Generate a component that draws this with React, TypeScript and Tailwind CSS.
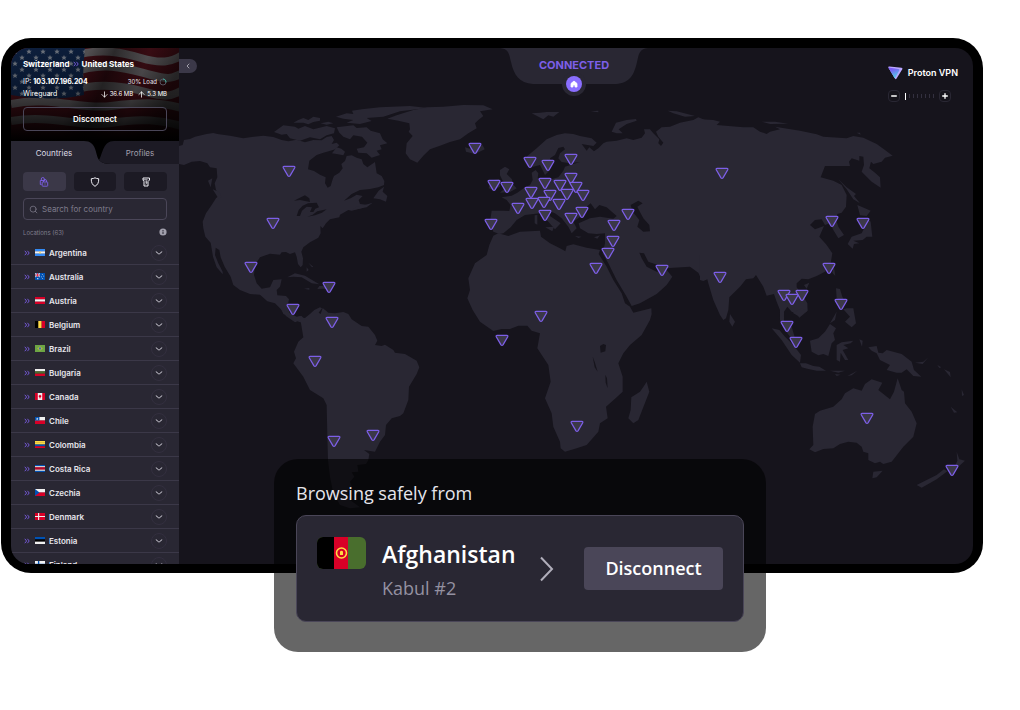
import type { ReactNode } from "react";
import {
  ArrowDown,
  ArrowUp,
  ChevronDown,
  ChevronLeft,
  Minus,
  Plus,
  Search,
} from "lucide-react";

interface Country {
  name: string;
  flag: ReactNode;
}

const hStripes = (...colors: string[]) =>
  colors.map((color, i) => (
    <rect key={i} y={(i * 12) / colors.length} width="18" height={12 / colors.length + 0.1} fill={color} />
  ));

const countries: Country[] = [
  {
    name: "Argentina",
    flag: (
      <>
        {hStripes("#338af3", "#f0f0f0", "#338af3")}
        <circle cx="9" cy="6" r="1.5" fill="#ffda44" />
      </>
    ),
  },
  {
    name: "Australia",
    flag: (
      <>
        <rect width="18" height="12" fill="#0052b4" />
        <path d="M0 0l9 7M9 0L0 7" stroke="#f0f0f0" strokeWidth="1.4" />
        <path d="M4.5 0v7M0 3.5h9" stroke="#f0f0f0" strokeWidth="2.4" />
        <path d="M4.5 0v7M0 3.5h9" stroke="#d80027" strokeWidth="1.3" />
        <path d="M4 8.5h2v2H4zM12.5 2h1.3v1.3h-1.3zM15 4.5h1.3v1.3H15zM11 6h1.3v1.3H11zM13 9h1.3v1.3H13z" fill="#f0f0f0" />
      </>
    ),
  },
  { name: "Austria", flag: hStripes("#d80027", "#f0f0f0", "#d80027") },
  {
    name: "Belgium",
    flag: (
      <>
        <rect width="6" height="12" fill="#000" />
        <rect x="6" width="6" height="12" fill="#ffda44" />
        <rect x="12" width="6" height="12" fill="#d80027" />
      </>
    ),
  },
  {
    name: "Brazil",
    flag: (
      <>
        <rect width="18" height="12" fill="#6da544" />
        <path d="M9 2L14 6 9 10 4 6z" fill="#b8b84a" />
        <circle cx="9" cy="6" r="2" fill="#3a6fb5" />
      </>
    ),
  },
  { name: "Bulgaria", flag: hStripes("#f0f0f0", "#496e2d", "#d80027") },
  {
    name: "Canada",
    flag: (
      <>
        <rect width="18" height="12" fill="#f0f0f0" />
        <path d="M0 0h5v12H0zM13 0h5v12h-5z" fill="#d80027" />
        <path d="M9 2.5l1 1.5 1.5.5-.5 2.500-1.500 1V10h-1V8L7 7l-.5-2.500L8 4z" fill="#d80027" />
      </>
    ),
  },
  {
    name: "Chile",
    flag: (
      <>
        {hStripes("#f0f0f0", "#d80027")}
        <rect width="8" height="6" fill="#0052b4" />
        <path d="M4 1l.7 1.5h1.5L5 3.5 5.5 5 4 4.2 2.5 5 3 3.5 1.8 2.5h1.5z" fill="#f0f0f0" />
      </>
    ),
  },
  { name: "Colombia", flag: hStripes("#ffda44", "#ffda44", "#0052b4", "#d80027") },
  { name: "Costa Rica", flag: hStripes("#0052b4", "#f0f0f0", "#d80027", "#d80027", "#f0f0f0", "#0052b4") },
  {
    name: "Czechia",
    flag: (
      <>
        {hStripes("#f0f0f0", "#d80027")}
        <path d="M0 0l8 6-8 6z" fill="#0052b4" />
      </>
    ),
  },
  {
    name: "Denmark",
    flag: (
      <>
        <rect width="18" height="12" fill="#d80027" />
        <path d="M6.5 0v12M0 6h18" stroke="#f0f0f0" strokeWidth="2" />
      </>
    ),
  },
  { name: "Estonia", flag: hStripes("#0052b4", "#000", "#f0f0f0") },
  {
    name: "Finland",
    flag: (
      <>
        <rect width="18" height="12" fill="#f0f0f0" />
        <path d="M6.5 0v12M0 6h18" stroke="#0052b4" strokeWidth="2.5" />
      </>
    ),
  },
];

const servers: [number, number][] = [
  [289, 171], [273, 223], [251, 267], [329, 287], [293, 309], [332, 322], [315, 361], [334, 441],
  [373, 435], [475, 148], [494, 185], [507, 187], [491, 224], [530, 162], [548, 165], [571, 159],
  [545, 183], [571, 178], [560, 185], [531, 192], [550, 195], [567, 194], [576, 187], [583, 195],
  [518, 208], [532, 203], [544, 202], [559, 204], [545, 215], [571, 218], [582, 212], [628, 214],
  [614, 225], [613, 241], [608, 253], [596, 268], [662, 270], [541, 316], [502, 340], [577, 426],
  [722, 173], [720, 277], [832, 221], [863, 223], [829, 268], [784, 295], [802, 295], [792, 299],
  [841, 304], [787, 326], [796, 342], [867, 418], [952, 470],
];

function WorldMap() {
  return (
    <svg
      className="absolute inset-0 h-full w-full"
      viewBox="179 48 794 516"
      preserveAspectRatio="xMidYMin slice"
      aria-hidden="true"
    >
      <g transform="scale(.33333)" fill="#292733">
        {/* North America and Greenland */}
        <g transform="translate(540 270)">
          <path d="M-3 168L8 165 12 150 30 147 45 140 80 132 100 129 112 132 150 137 190 145 215 141 250 137 280 141 305 150 325 154 350 149 375 157 400 150 425 151 440 141 455 138 462 150 455 162 470 158 478 166 466 178 446 184 430 188 410 195 388 212 384 238 402 243 420 254 437 262 435 280 443 293 452 288 458 268 462 258 478 248 488 235 484 222 495 213 500 198 515 196 530 203 545 208 550 222 562 232 585 216 590 250 605 258 613 273 612 285 595 292 570 297 540 300 515 312 492 332 512 325 530 314 548 318 536 330 540 342 565 345 545 355 515 362 505 360 480 374 478 382 450 388 438 400 428 415 421 408 422 430 415 443 390 457 370 472 364 485 369 505 368 525 362 532 354 522 350 500 345 487 330 492 318 486 305 487 300 494 270 491 240 502 225 525 222 555 230 580 245 596 270 592 280 570 305 568 300 590 290 600 292 616 318 618 327 628 322 650 330 672 345 683 360 678 372 688 380 700 370 712 366 698 352 694 345 697 318 678 300 655 285 640 262 634 240 614 210 612 180 600 160 585 152 560 134 530 122 502 118 480 107 473 105 495 115 520 128 545 128 553 110 532 99 500 92 458 76 440 70 415 68 395 78 370 95 345 108 325 118 316 108 300 104 280 112 262 110 235 90 232 82 220 60 213 35 215 12 225-3 222Z" />
          <path d="M622 86L650 76 700 60 740 52 790 50 850 45 910 46 938 58 900 64 910 78 895 90 885 100 890 115 865 130 840 148 810 156 780 167 750 178 730 197 712 218 690 208 677 190 680 160 698 138 686 125 690 118 688 100 655 92Z" />
          <path d="M282 126L310 106 345 110 355 116 375 108 400 118 425 112 440 108 465 115 462 130 440 136 420 148 390 142 360 152 330 145 320 132 305 134ZM340 98L355 90 370 84 385 90 400 80 420 84 420 92 400 96 385 103 370 98ZM468 80L500 70 520 72 516 62 545 58 600 52 690 48 742 54 660 64 610 80 560 84 575 93 540 102 500 98 520 90 490 86ZM422 100L445 95 460 100 440 104ZM470 112L520 106 530 114 560 112 572 122 600 130 608 148 622 160 600 166 605 178 590 182 600 195 575 203 560 190 535 188 530 176 552 172 562 158 546 140 520 136 510 148 490 140 478 128ZM456 190L470 172 484 176 495 185 490 196 470 192ZM580 325L596 302 612 290 608 305 622 318 618 335 600 328ZM516 360L530 350 552 346 578 338 560 352ZM98 298L118 306 125 322 116 326ZM84 272L97 265 92 292ZM322 562L345 550 375 557 400 572 418 583 395 580 365 562 340 560ZM412 597L418 588 432 588 446 598 428 596ZM372 596L388 594 388 599ZM380 532L386 540 380 545ZM385 518L400 530 396 532Z" />
          <path
            fill="#16141c"
            d="M342 332L358 324 375 316 388 325 390 336 375 333 360 330ZM350 378L356 360 368 347 384 340 410 338 417 352 406 356 400 366 390 366 396 352 380 350 366 362 360 378ZM382 380L398 374 412 364 440 358 426 368 405 376Z"
          />
        </g>
        {/* South America */}
        <g transform="translate(780 930)">
          <path d="M120 22L135 24 150 12 163 0 180 -8 186 -5 176 8 182 12 188-6 205 8 225 10 250 6 265 12 275 28 305 48 325 50 345 75 352 92 345 105 365 108 375 104 400 120 405 128 435 132 470 152 478 172 470 192 447 230 445 270 430 310 420 318 395 325 378 345 375 375 360 395 345 425 312 420 328 432 325 450 318 462 292 465 295 485 275 487 283 500 270 515 276 530 262 545 270 570 300 592 270 595 240 585 220 550 210 500 204 450 202 375 200 285 190 265 150 240 130 200 100 160 108 145 102 125 115 95 130 82Z" />
          <path d="M65 0L80 5 110 20 125 18 135 30 120 30 105 33 90 20 70 12Z" />
        </g>
        {/* Europe, Middle East and Africa */}
        <g transform="translate(1320 270)">
          <path d="M155 362L190 362 208 363 212 345 200 330 185 322 215 317 232 308 255 292 270 285 278 270 275 248 287 240 295 250 293 265 305 272 335 268 355 262 370 242 375 230 400 222 420 216 390 220 365 216 355 205 360 190 375 178 370 170 355 174 345 195 330 205 335 225 325 245 315 255 305 235 300 225 280 230 262 228 252 212 262 198 290 175 320 148 350 135 375 130 400 132 420 138 455 145 470 158 460 168 425 162 440 182 448 172 462 184 475 175 490 160 500 155 530 152 560 145 580 150 605 143 615 130 612 118 630 118 640 130 658 148 655 160 663 168 670 158 655 140 648 125 665 112 690 110 720 98 760 90 775 82 800 92 800 560 785 570 775 548 750 530 700 533 680 535 645 522 625 515 612 490 598 488 605 505 620 530 650 545 680 540 697 560 680 585 650 612 600 640 575 648 560 620 530 570 505 520 488 490 495 460 495 430 470 432 445 430 420 415 416 400 450 385 480 380 520 386 530 378 500 352 478 345 465 358 452 340 440 350 428 375 400 395 410 415 395 430 385 410 365 385 345 370 325 362 330 378 362 400 345 418 325 395 300 370 280 372 255 375 230 390 212 412 190 430 178 432 160 425 150 395Z" />
          <path d="M160 437L175 430 205 438 240 425 300 422 303 440 330 460 360 475 376 484 380 468 400 463 440 473 480 480 476 492 500 530 520 570 545 610 555 640 570 650 580 668 634 655 635 672 630 690 605 735 570 765 550 790 535 820 548 860 548 905 530 922 498 950 503 985 480 1000 475 1025 440 1065 410 1075 375 1085 362 1075 360 1055 340 1010 335 970 315 925 332 875 325 825 292 775 300 730 275 722 262 707 235 707 210 717 185 717 160 723 120 695 98 660 82 625 90 600 85 565 105 520 140 495 148 465Z" />
          <path d="M180 240L195 230 208 238 200 252 216 268 218 282 230 295 210 306 180 308 195 295 198 282 188 272 180 256ZM150 280L160 270 178 268 180 290 160 300 146 295ZM75 172L90 176 100 168 128 166 134 178 105 192 78 185ZM515 125L528 98 560 90 588 87 590 92 560 102 536 118 548 130 530 130ZM275 70L300 68 320 66 358 66 340 80 325 76 310 88ZM683 62L710 64 765 78 735 80 700 70ZM452 64L475 62 475 67ZM284 376L292 375 292 404 284 400ZM316 412L342 410 337 424ZM405 438L425 440 415 444ZM462 442L480 436 472 446ZM620 875L628 905 595 990 580 1000 565 985 572 960 574 922 600 905 612 888Z" />
          <path
            fill="#16141c"
            d="M572 345L595 332 608 340 592 350 598 362 610 385 628 405 630 424 610 425 592 410 598 390 578 365ZM480 768L490 762 498 765 496 784 482 788ZM458 800L464 815 473 845 464 832ZM496 854L501 865 503 895 497 878Z"
          />
        </g>
        {/* Asia */}
        <g transform="translate(2100 270)">
          <path d="M0 88L40 90 60 95 50 105 130 112 160 112 180 125 200 132 210 125 240 118 225 110 300 122 350 133 370 140 440 145 460 138 490 143 530 162 555 180 578 197 555 203 545 215 520 222 513 215 508 235 525 248 540 262 542 293 515 275 485 245 492 225 490 200 478 198 478 212 455 205 447 215 450 228 375 228 362 262 400 272 425 285 440 315 438 350 425 368 412 372 408 388 415 410 432 435 415 445 400 420 390 400 375 405 365 388 345 390 330 405 345 418 372 408 358 440 380 465 397 490 392 520 375 545 350 558 325 568 305 566 290 580 290 592 310 620 322 640 323 662 298 683 290 670 275 665 262 650 252 665 252 690 262 720 250 715 240 690 240 660 230 635 222 612 200 617 190 590 168 555 160 565 138 568 120 590 88 622 85 660 78 685 70 690 60 675 40 630 25 580 22 568 10 573 0 570Z" />
          <path d="M185 95L225 95 265 101 210 102ZM470 128L480 128 482 134ZM415 268L440 292 468 312 462 318 480 340 460 328 440 298ZM472 345L495 355 512 362 500 378 480 376ZM500 385L512 395 517 440 500 440 488 450 460 452 478 460 462 462 458 476 443 462 455 440 485 430 495 410ZM90 672L105 695 97 710 88 695ZM312 585L328 578 320 596ZM402 530L406 558 397 548ZM408 595L420 597 427 620 440 645 420 630 410 625ZM390 700L410 665 405 690ZM430 658L440 655 460 655 468 700 455 712 435 695 450 680Z" />
        </g>
        {/* Indonesia and Oceania */}
        <g transform="translate(2160 930)">
          <path d="M155 55L178 60 195 80 220 105 243 135 240 158 215 135 185 90ZM190 30L215 50 225 85 210 80 195 60ZM240 160L258 160 280 168 298 170 318 182 290 182 262 176 245 172ZM270 92L295 85 315 65 330 42 348 55 340 70 345 90 335 100 325 138 310 132 295 136 275 125ZM218 8L245-5 262 2 238 20ZM350 105L365 97 400 92 392 100 370 105 385 115 368 120 385 150 375 150 362 128 360 155 350 150ZM418 88L428 92 426 110ZM445 112L470 108 475 128 488 130 500 120 545 132 575 155 582 180 604 200 580 198 560 178 545 188 530 188 500 180 510 165 480 150 470 130 455 122ZM585 158L610 155 625 142 608 162ZM330 182L375 182 355 188ZM382 198L412 182 395 196ZM345 192L362 194 350 198ZM640 150L650 160ZM652 165L664 172 658 174ZM672 178L690 186 692 202ZM725 238L732 255 726 258ZM692 290L712 307 702 308ZM268 418L280 405 278 350 285 312 300 302 340 290 365 268 375 250 400 235 425 242 435 222 455 208 487 218 475 240 510 268 522 245 533 205 545 240 552 245 555 280 575 305 590 340 580 380 550 410 515 455 490 462 480 455 465 460 445 450 445 430 430 425 425 410 410 398 385 395 360 402 340 415 310 417 285 427ZM460 485L488 482 470 502 457 505ZM710 425L718 448 735 452 715 470 700 480 712 452ZM590 525L620 510 650 495 672 478 682 484 650 508 605 533Z" />
        </g>
      </g>
      <g fill="#3b3848" stroke="#7d5fe8" strokeWidth="1.3" strokeLinejoin="round">
        {servers.map(([x, y]) => (
          <path
            key={`${x}-${y}`}
            transform={`translate(${x} ${y})`}
            d="M-4.7 -4.7H4.7Q6.4 -4.5 5.6 -3L1 4.8Q0 6 -1 4.8L-5.6 -3Q-6.4 -4.5 -4.7 -4.7Z"
          />
        ))}
      </g>
    </svg>
  );
}

// Darkened, waving stars and stripes behind the connection details
function HeaderFlag() {
  return (
    <svg
      className="absolute inset-0 h-full w-full"
      viewBox="0 0 168 93"
      preserveAspectRatio="none"
      aria-hidden="true"
    >
      <defs>
        <linearGradient id="fade" x1="0" y1="0" x2="0" y2="1">
          <stop offset="0" stopColor="#000" stopOpacity=".2" />
          <stop offset=".5" stopColor="#000" stopOpacity=".4" />
          <stop offset="1" stopColor="#000" />
        </linearGradient>
        <linearGradient id="folds" x1="0" y1="0" x2="1" y2="0.2">
          <stop offset="0" stopColor="#000" stopOpacity=".2" />
          <stop offset=".45" stopColor="#000" stopOpacity=".25" />
          <stop offset=".6" stopColor="#000" stopOpacity=".6" />
          <stop offset=".8" stopColor="#000" stopOpacity=".25" />
          <stop offset="1" stopColor="#000" stopOpacity=".6" />
        </linearGradient>
        <pattern id="stars" width="14" height="12" patternUnits="userSpaceOnUse">
          <rect width="14" height="12" fill="#14305f" />
          <path
            fill="#a9b3c4"
            d="M4 1l.8 1.7 1.9.1-1.4 1.3.5 1.9L4 5l-1.8 1 .5-1.900-1.400-1.300 1.900-.1zM11 7l.8 1.700 1.900.1-1.400 1.300.5 1.900L11 11l-1.800 1 .5-1.900-1.400-1.300 1.900-.1z"
          />
        </pattern>
      </defs>
      <rect width="168" height="93" fill="#5f1420" />
      <g fill="none" stroke="#8a8589" strokeWidth="8">
        <path d="M60 8C90 0 110 4 130 10S160 14 170 8" />
        <path d="M60 25C95 12 120 22 140 27S160 30 170 26" />
        <path d="M60 42C90 34 115 38 135 44S160 48 170 43" />
        <path d="M0 56C40 48 70 62 100 58S150 54 170 60" />
        <path d="M0 73C40 66 70 80 100 75S150 72 170 78" />
      </g>
      <path d="M0 0H74Q71 25 73 47Q40 54 0 47Z" fill="url(#stars)" />
      <rect width="168" height="93" fill="url(#folds)" />
      <rect width="168" height="93" fill="url(#fade)" />
    </svg>
  );
}

function DoubleChevron() {
  return (
    <svg className="h-[6px] w-[6px] shrink-0" viewBox="0 0 6 6" fill="none" stroke="#7d5fe8" aria-hidden="true">
      <path d="M.8 .8L2.6 3L.8 5.200M3.400 .8L5.200 3L3.400 5.200" strokeWidth=".9" />
    </svg>
  );
}

function ConnectionHeader() {
  return (
    <header className="relative shrink-0 bg-black px-3 py-[10px]">
      <HeaderFlag />
      <div className="relative">
        <p className="flex items-center gap-[3px] text-[8px] leading-3 font-bold text-white">
          Switzerland
          <DoubleChevron />
          United States
        </p>
        <div className="mt-[6px] flex items-center justify-between text-[7px] leading-3">
          <span>
            IP: <b className="font-bold">103.107.196.204</b>
          </span>
          <span className="flex items-center gap-[2px] text-[6px] text-[#e6e5ec]">
            30% Load
            <svg className="h-2 w-2" viewBox="0 0 8 8" fill="none" aria-hidden="true">
              <circle cx="4" cy="4" r="3" stroke="#55525f" />
              <path d="M4 1a3 3 0 0 1 2.9 3.5" stroke="#3fae9b" />
            </svg>
          </span>
        </div>
        <div className="flex items-center justify-between text-[7px] leading-3">
          <span>Wireguard</span>
          <span className="flex items-center text-[6px]">
            <ArrowDown className="h-[9px] w-[9px]" />
            <span className="mr-1 ml-px">36.6 MB</span>
            <ArrowUp className="h-[9px] w-[9px]" />
            <span className="ml-px">5.3 MB</span>
          </span>
        </div>
        <button
          type="button"
          className="mt-[7px] block h-6 w-full rounded-[4px] border border-[#4a4658] text-[8px] font-semibold text-white"
        >
          Disconnect
        </button>
      </div>
    </header>
  );
}

function Tabs() {
  return (
    <div className="relative h-[23px] shrink-0 bg-black" role="tablist">
      <svg
        className="absolute inset-0 h-full w-full"
        viewBox="0 0 168 23"
        preserveAspectRatio="none"
        aria-hidden="true"
      >
        <path d="M0 0H73C86 0 84 13 88 19C91 22 95 23 100 23H168V24H0Z" fill="#292733" />
        <path d="M168 0H103C92 0 92 12 88 19C91 22 95 23 100 23H168Z" fill="#1c1a24" />
      </svg>
      <div className="relative flex h-full pl-1 text-[8px]">
        <button type="button" role="tab" aria-selected="true" className="flex-1 text-[#dedce6]">
          Countries
        </button>
        <button type="button" role="tab" aria-selected="false" className="flex-1 pl-2 text-[#a19fac]">
          Profiles
        </button>
      </div>
    </div>
  );
}

function Filters() {
  return (
    <div className="grid grid-cols-3 gap-2">
      <button
        type="button"
        aria-label="Secure core"
        className="flex h-[19px] items-center justify-center rounded-[4px] bg-[#3b3848]"
      >
        <svg className="h-[10px] w-[10px]" viewBox="0 0 10 10" fill="none" stroke="#7d5fe8" strokeWidth=".9">
          <path d="M2.5 7.500H1.300V3.500H6" />
          <path d="M2.3 3.500V2a1.500 1.500 0 0 1 3 0v1" />
          <rect x="3.2" y="5" width="5.500" height="4.200" rx=".5" />
          <path d="M4.5 5V4a1.500 1.500 0 0 1 3 0v1M5.500 7h1" />
        </svg>
      </button>
      <button
        type="button"
        aria-label="NetShield"
        className="flex h-[19px] items-center justify-center rounded-[4px] bg-[#1c1a24]"
      >
        <svg className="h-[10px] w-[10px]" viewBox="0 0 10 10" fill="none" stroke="#f0eff5" strokeLinejoin="round">
          <path d="M5 .8Q6.5 1.700 8.700 1.700C9 5.500 7.500 8 5 9.300C2.500 8 1 5.500 1.300 1.700Q3.500 1.700 5 .8Z" />
        </svg>
      </button>
      <button
        type="button"
        aria-label="Kill switch"
        className="flex h-[19px] items-center justify-center rounded-[4px] bg-[#1c1a24]"
      >
        <svg className="h-[10px] w-[10px]" viewBox="0 0 10 10" fill="none" stroke="#f0eff5" strokeLinejoin="round">
          <path d="M2 1H8.500V3L7 4.500V9H3V4.500L2 3Z" />
          <path d="M2.200 2.800H6.500M6.200 3.500L4.500 5H6L4.800 7.500" strokeWidth=".8" />
        </svg>
      </button>
    </div>
  );
}

function CountryRow({ name, flag }: Country) {
  return (
    <li className="flex h-6 items-center border-b border-[#3b3848] pr-3 pl-[13px]">
      <DoubleChevron />
      <svg className="ml-[5px] h-[7px] w-[10px]" viewBox="0 0 18 12" preserveAspectRatio="none" aria-hidden="true">
        {flag}
      </svg>
      <span className="ml-1 flex-1 text-[8px] font-semibold text-[#e6e5ec]">{name}</span>
      <button
        type="button"
        aria-label={`Show ${name} servers`}
        className="flex h-4 w-4 items-center justify-center rounded-full border border-[#332f3f] text-[#d6d4de]"
      >
        <svg className="h-[4px] w-2" viewBox="0 0 8 4" fill="none" stroke="currentColor" aria-hidden="true">
          <path d="M.8 .5L3.400 2.700Q4 3.200 4.600 2.700L7.200 .5" />
        </svg>
      </button>
    </li>
  );
}

function Sidebar() {
  return (
    <aside className="flex w-[168px] shrink-0 flex-col bg-[#292733] text-white">
      <ConnectionHeader />
      <Tabs />
      <div className="px-3 pt-2">
        <Filters />
        <label className="mt-[7px] flex h-[22px] items-center gap-1 rounded-[4px] border border-[#4a4658] px-[5px] text-[#7f7c8c]">
          <Search className="h-[9px] w-[9px] shrink-0" />
          <input
            type="text"
            aria-label="Search for country"
            placeholder="Search for country"
            className="w-full min-w-0 bg-transparent text-[8px] outline-none placeholder:text-[#7f7c8c]"
          />
        </label>
        <div className="mt-2 flex h-2 items-center justify-between text-[6px] text-[#7f7c8c]">
          <span>Locations (63)</span>
          <svg className="h-2 w-2" viewBox="0 0 8 8" aria-hidden="true">
            <circle cx="4" cy="4" r="3.600" fill="#a19fac" />
            <path d="M4 3.500V6M4 2V3" stroke="#292733" />
          </svg>
        </div>
      </div>
      <ul className="mt-[5px] min-h-0 flex-1 overflow-y-auto [scrollbar-width:none]">
        {countries.map((country) => (
          <CountryRow key={country.name} {...country} />
        ))}
      </ul>
    </aside>
  );
}

function StatusNotch() {
  return (
    <div className="absolute top-0 left-[calc(50%-2px)] flex h-12 w-[148px] -translate-x-1/2 flex-col items-center">
      <svg className="absolute inset-0 h-full w-full" viewBox="0 0 148 48" aria-hidden="true">
        <path
          d="M0 0C9 1 9 6 11 14C14 27 19 35 33 36H116C130 35 134 27 137 14C139 6 139 1 148 0Z"
          fill="#292733"
        />
        <circle cx="74" cy="36" r="12" fill="#292733" />
        <circle cx="74" cy="36" r="8" fill="#8a6eff" />
        <path
          d="M74 33L77 35.500V39H75V37H73V39H71V35.500Z"
          fill="#fff"
          stroke="#fff"
          strokeWidth=".8"
          strokeLinejoin="round"
        />
      </svg>
      <p className="relative mt-[9px] text-[11px] leading-4 font-bold text-[#7d5fe8]">CONNECTED</p>
    </div>
  );
}

function ZoomControl() {
  return (
    <div className="flex items-center justify-between pr-[7px] text-white">
      <button
        type="button"
        aria-label="Zoom out"
        className="flex h-3 w-3 items-center justify-center rounded-[4px] border border-[#292733]"
      >
        <Minus className="h-2 w-2 shrink-0" strokeWidth={4} />
      </button>
      <div className="flex items-center gap-[3px]">
        <span className="h-[7px] w-px bg-white" />
        {[1, 2, 3, 4, 5, 6, 7].map((step) => (
          <span key={step} className="h-1 w-px bg-[#33303f]" />
        ))}
      </div>
      <button
        type="button"
        aria-label="Zoom in"
        className="flex h-3 w-3 items-center justify-center rounded-[4px] border border-[#292733]"
      >
        <Plus className="h-2 w-2 shrink-0" strokeWidth={4} />
      </button>
    </div>
  );
}

function MapPanel() {
  return (
    <main className="relative min-w-0 flex-1 overflow-hidden bg-[#16141c]">
      <WorldMap />
      <button
        type="button"
        aria-label="Collapse sidebar"
        className="absolute top-[11px] left-0 flex h-[14px] w-[18px] items-center justify-center rounded-r-full bg-[#3b3848] text-[#d6d4de]"
      >
        <ChevronLeft className="h-2 w-2" />
      </button>
      <StatusNotch />
      <div className="absolute top-[18px] right-[15px] flex w-[70px] flex-col gap-[10px]">
        <div className="flex items-center justify-between">
          <svg className="h-[14px] w-[15px]" viewBox="0 0 15 14" aria-hidden="true">
            <defs>
              <linearGradient id="brand" x1="0.2" y1="0" x2="0.6" y2="1">
                <stop offset=".2" stopColor="#7b5cf5" />
                <stop offset="1" stopColor="#4fd6e8" />
              </linearGradient>
            </defs>
            <path d="M.3 1.500Q0 .3 1.500 .5L13.500 1.800Q15 2 14.300 3.300L8.600 12.500Q7.700 13.800 6.900 12.500Z" fill="#b9a6ff" />
            <path d="M.3 1.500L10.500 3Q12 3.300 11.300 4.500L7.300 11.500Q6.800 12.300 6.500 12Z" fill="url(#brand)" />
          </svg>
          <span className="text-[9px] leading-[14px] font-semibold whitespace-nowrap text-white">Proton VPN</span>
        </div>
        <ZoomControl />
      </div>
    </main>
  );
}

function ConnectionCard() {
  return (
    <section className="absolute -bottom-[79px] left-[273px] w-[492px] rounded-[24px] bg-black/60 px-[22px] pt-5 pb-[30px] font-['Open_Sans','Noto_Sans',sans-serif]">
      <h2 className="text-[18px] leading-7 text-[#e6e5ec]">Browsing safely from</h2>
      <div className="mt-2 flex h-[107px] items-center rounded-[10px] border border-[#4a4658] bg-[#292733] px-5">
        <svg className="mb-8 h-8 w-[49px] rounded-[6px]" viewBox="0 0 49 32" aria-label="Flag of Afghanistan">
          <rect width="49" height="32" fill="#496e2d" />
          <rect width="17" height="32" fill="#000" />
          <rect x="17" width="14" height="32" fill="#d80027" />
          <circle cx="24.500" cy="16" r="5" fill="none" stroke="#ffda44" strokeWidth="1.600" />
          <path d="M23 14.500Q24.500 13 26 14.500V18H23Z" fill="#ffda44" />
        </svg>
        <div className="ml-4 flex-1 pt-[2px]">
          <p className="text-[23px] leading-9 font-semibold text-white">Afghanistan</p>
          <p className="text-[18px] leading-8 text-[#9491a1]">Kabul #2</p>
        </div>
        <svg className="mr-[30px] h-[26px] w-[14px]" viewBox="0 0 14 26" fill="none" aria-hidden="true">
          <path d="M1 1.500L12 13L1 24.500" stroke="#b0aebb" strokeWidth="2" />
        </svg>
        <button
          type="button"
          className="h-[43px] w-[139px] rounded-[4px] bg-[#4a4658] text-[18px] font-semibold text-white"
        >
          Disconnect
        </button>
      </div>
    </section>
  );
}

export default function App() {
  return (
    <div className="flex h-screen min-h-[480px] flex-col bg-white pt-[38px] pr-[37px] pb-[137px] pl-px font-['Inter',sans-serif]">
      <div className="relative flex min-h-0 flex-1 flex-col">
        <div className="min-h-0 flex-1 rounded-[30px] bg-black p-[10px] pb-[9px]">
          <div className="flex h-full overflow-hidden rounded-[18px]">
            <Sidebar />
            <MapPanel />
          </div>
        </div>
        <ConnectionCard />
      </div>
    </div>
  );
}
